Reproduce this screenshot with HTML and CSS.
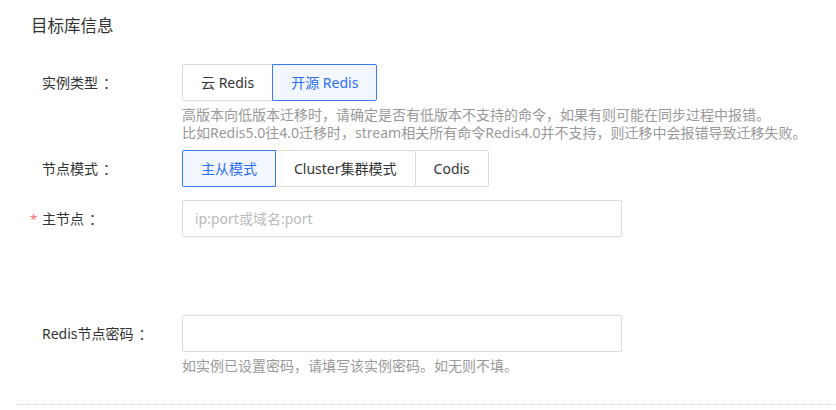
FILE: index.html
```
<!DOCTYPE html>
<html lang="zh-CN">
<head>
<meta charset="utf-8">
<title>目标库信息</title>
<link rel="stylesheet" href="styles.css">
</head>
<body>
<div class="page">
  <div class="title">目标库信息</div>
  <div class="form">
    <div class="row row-type">
      <div class="label">实例类型<span class="colon">：</span></div>
      <div class="control">
        <div class="btn-group">
          <button class="seg">云 Redis</button>
          <button class="seg active">开源 Redis</button>
        </div>
        <div class="help">高版本向低版本迁移时，请确定是否有低版本不支持的命令，如果有则可能在同步过程中报错。<br>比如Redis5.0往4.0迁移时，stream相关所有命令Redis4.0并不支持，则迁移中会报错导致迁移失败。</div>
      </div>
    </div>
    <div class="row row-mode">
      <div class="label">节点模式<span class="colon">：</span></div>
      <div class="control">
        <div class="btn-group">
          <button class="seg active">主从模式</button>
          <button class="seg">Cluster集群模式</button>
          <button class="seg">Codis</button>
        </div>
      </div>
    </div>
    <div class="row row-master">
      <div class="label"><span class="req">*</span>主节点<span class="colon">：</span></div>
      <div class="control">
        <input class="input" type="text" placeholder="ip:port或域名:port">
      </div>
    </div>
    <div class="row row-pass">
      <div class="label">Redis节点密码<span class="colon">：</span></div>
      <div class="control">
        <input class="input" type="text">
        <div class="help">如实例已设置密码，请填写该实例密码。如无则不填。</div>
      </div>
    </div>
  </div>
  <div class="divider"></div>
</div>
</body>
</html>
```
FILE: styles.css
```
html, body {
  margin: 0;
  padding: 0;
  background: #fff;
}
body {
  font-family: "Noto Sans", "Noto Sans CJK SC", sans-serif;
  color: #333;
  font-size: 14px;
}
.page {
  padding-top: 14px;
}
.title {
  margin-left: 31px;
  font-size: 16.5px;
  line-height: 24px;
  color: #333;
}
.form {
  margin-top: 26px;
}
.row {
  display: flex;
  align-items: flex-start;
}
.row-mode { margin-top: 8px; }
.row-master { margin-top: 13px; }
.row-pass { margin-top: 77px; }
.label {
  width: 140px;
  padding-left: 42px;
  line-height: 37px;
  font-size: 14px;
  color: #333;
  white-space: nowrap;
}
.colon {
  margin-left: 5px;
}
.req {
  display: inline-block;
  width: 12px;
  margin-left: -12px;
  color: #f56c6c;
  font-size: 13px;
}
.control {
  display: flex;
  flex-direction: column;
}
.btn-group {
  display: flex;
}
.seg {
  position: relative;
  height: 37px;
  padding: 0 18px;
  margin: 0 0 0 -1px;
  border: 1px solid #dcdcdc;
  background: #fff;
  color: #333;
  font-family: inherit;
  font-size: 14px;
  line-height: 35px;
  cursor: pointer;
}
.seg:first-child {
  margin-left: 0;
  border-radius: 2px 0 0 2px;
}
.seg:last-child {
  border-radius: 0 2px 2px 0;
}
.seg.active {
  z-index: 1;
  border-color: #3d7bf5;
  background: #f1f6ff;
  color: #2f6ef2;
}
.help {
  margin-top: 5px;
  font-size: 14px;
  line-height: 18px;
  color: #999;
  white-space: nowrap;
}
.input {
  box-sizing: border-box;
  width: 440px;
  height: 37px;
  padding: 0 12px;
  border: 1px solid #dcdcdc;
  border-radius: 2px;
  font-family: inherit;
  font-size: 14px;
  color: #333;
  outline: none;
}
.input::placeholder {
  color: #bbb;
}
.divider {
  margin-top: 29px;
  margin-left: 16px;
  border-top: 1px dotted #d0d0d0;
}
```
